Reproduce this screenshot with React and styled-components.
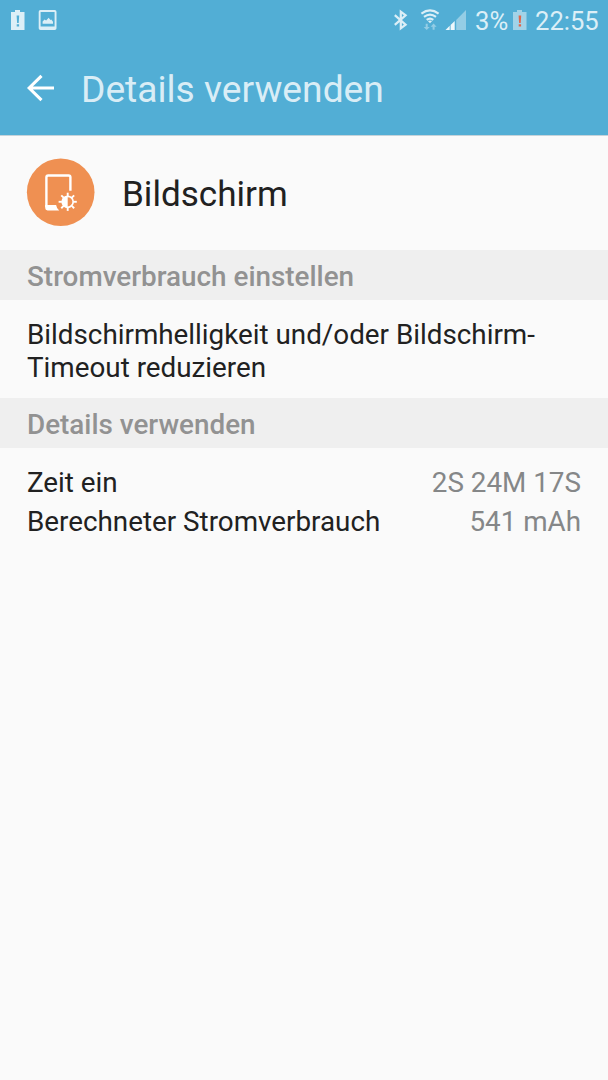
import React from 'react'
import styled, { createGlobalStyle } from 'styled-components'

const GlobalStyle = createGlobalStyle`
  body {
    margin:0;
    background:#fafafa;
    font-family:Roboto, "Liberation Sans", sans-serif;
  }
`

const Screen = styled.div`
  display:flex;
  flex-direction:column;
  min-height:1080px;
  background:#fafafa;
  overflow:hidden;
`

const Header = styled.header`
  box-sizing:border-box;
  height:136px;
  background:#52aed5;
  border-bottom:1px solid #c5d3da;
`

const StatusBar = styled.div`
  display:flex;
  justify-content:space-between;
  height:40px;
  padding:0 9px 0 10px;
  color:#dceff7;
`

const StatusGroup = styled.div`
  display:flex;
  align-items:center;
`

const StatusIcon = styled.svg`
  display:block;
  flex:none;
  margin-right:${props => props.$gap || 0}px;
`

const StatusText = styled.span`
  font-size:25.6px;
  line-height:40px;
  width:${props => props.$width}px;
  white-space:nowrap;
  padding-top:2px;
  margin-right:${props => props.$gap || 0}px;
`

const TitleBar = styled.div`
  display:flex;
  align-items:center;
  height:95px;
  padding-left:26px;
`

const BackButton = styled.button`
  display:block;
  width:30px;
  height:30px;
  margin:0 25px 0 0;
  padding:0;
  border:0;
  background:none;
`

const Title = styled.h1`
  margin:0;
  padding-top:3px;
  font-size:37.2px;
  font-weight:400;
  line-height:44px;
  white-space:nowrap;
  color:#d9edf6;
`

const AppRow = styled.div`
  display:flex;
  align-items:center;
  height:114px;
  padding-left:26px;
`

const AppName = styled.h2`
  margin:0 0 0 26px;
  padding-top:2px;
  font-size:35.1px;
  font-weight:400;
  color:#212121;
`

const SectionHeader = styled.h3`
  box-sizing:border-box;
  height:50px;
  margin:0;
  padding:2px 27px 0;
  background:#efefef;
  color:#929292;
  font-size:27.85px;
  font-weight:500;
  line-height:50px;
`

const Suggestion = styled.p`
  box-sizing:border-box;
  height:98px;
  margin:0;
  padding:19px 27px 0;
  font-size:27.8px;
  line-height:32.5px;
  color:#212121;
`

const DetailList = styled.div`
  padding:15px 27px 0;
`

const DetailRow = styled.div`
  display:flex;
  justify-content:space-between;
  height:39px;
  font-size:27.8px;
  line-height:39px;
`

const DetailLabel = styled.span`
  color:#212121;
`

const DetailValue = styled.span`
  color:#858788;
`

const BatteryIcon = ({fill, mark, gap}) => (
  <StatusIcon width="16" height="22" viewBox="0 0 16 22" $gap={gap}>
    <path fill={fill} d="M5 1h5v2h4.5v18H1V3h4z" />
    <path fill={mark} d="M6.6 6.5h2.6l-.5 7.5H7.1zM6.7 15.3h2.4v2.2H6.7z" />
  </StatusIcon>
)

const PictureIcon = () => (
  <StatusIcon width="20" height="22" viewBox="0 0 20 22">
    <path
      fill="#dceff7"
      fillRule="evenodd"
      d="M2.5 1h14.2a1.8 1.8 0 0 1 1.8 1.8v16.4a1.8 1.8 0 0 1-1.8 1.8H2.5A1.8 1.8 0 0 1 .7 19.2V2.8A1.8 1.8 0 0 1 2.5 1zM2.6 3v14.5h14V3z"
    />
    <path fill="#dceff7" d="M4.6 14.8v-2.4l2-2 1.5 1.2 2.6-2.9 1.7 2.4.9-.6 1.7 2.2v2.1z" />
  </StatusIcon>
)

const BluetoothIcon = () => (
  <StatusIcon width="16" height="22" viewBox="0 0 16 22" $gap="11">
    <path
      fill="none"
      stroke="#dceff7"
      strokeWidth="2.2"
      d="M1.8 6.2l10.8 9.5-4.8 3.6V2.7l4.8 3.6L1.8 15.8"
    />
  </StatusIcon>
)

const WifiIcon = () => (
  <StatusIcon width="20" height="22" viewBox="0 0 20 22" $gap="5">
    <g fill="none" stroke="#dceff7" strokeWidth="2.1">
      <path d="M1.4 4.6q8.6-6.4 17.2 0" />
      <path d="M4 7.9q6-4.6 12 0" />
      <path d="M6.7 10.9q3.3-2.6 6.6 0" />
    </g>
    <path fill="#dceff7" d="M7.9 12.1q2.1-1.3 4.2 0L10 14.2z" />
    <path fill="#94cde5" d="M5.7 14.8h2v3.1h2L6.7 21l-3-3.1h2zM12.6 20.8h2v-3.1h2l-3-3.2-3 3.2h2z" />
  </StatusIcon>
)

const SignalIcon = () => (
  <StatusIcon width="22" height="22" viewBox="0 0 22 22" $gap="8">
    <path fill="#94cde5" d="M11.2 10.9L21 1v20h-9.8z" />
    <path fill="#eef8fc" d="M.5 21L4.7 16.8v4.2zM5.6 15.9L9.7 12V21H5.6z" />
  </StatusIcon>
)

const BackIcon = () => (
  <svg width="30" height="30" viewBox="0 0 30 30">
    <path
      fill="none"
      stroke="#ffffff"
      strokeWidth="3.1"
      d="M15.5 2.8L3.2 15l12.3 12.2M3.2 15H28"
    />
  </svg>
)

const DisplayIcon = () => {
  const rays = [0, 45, 90, 135, 180, 225, 270, 315]

  return (
    <svg width="70" height="70" viewBox="0 0 70 70">
      <circle cx="34.7" cy="34.3" r="33.8" fill="#ef9052" />
      <path
        fill="none"
        stroke="#ffffff"
        strokeWidth="2.4"
        d="M44.4 32.7V19.3q0-1.8-1.8-1.8H22.2q-1.8 0-1.8 1.8V49"
      />
      <path fill="#ffffff" d="M19.2 47h10.9q.4 3.2 3.1 5.4H21.6q-2.4 0-2.4-2.4z" />
      <circle cx="41.7" cy="43.8" r="5.5" fill="none" stroke="#ffffff" strokeWidth="1.7" />
      <path fill="#ffffff" d="M41.7 38.2a5.6 5.6 0 0 0 0 11.2z" />
      {rays.map(angle => (
        <path
          key={angle}
          stroke="#ffffff"
          strokeWidth="1.9"
          d="M41.7 38v-3.3"
          transform={`rotate(${angle} 41.7 43.8)`}
        />
      ))}
    </svg>
  )
}

const details = [
  {label: 'Zeit ein', value: '2S 24M 17S'},
  {label: 'Berechneter Stromverbrauch', value: '541 mAh'},
]

const App = () => (
  <Screen>
    <GlobalStyle />
    <Header>
      <StatusBar>
        <StatusGroup>
          <BatteryIcon fill="#dceff7" mark="#52aed5" gap={12} />
          <PictureIcon />
        </StatusGroup>
        <StatusGroup>
          <BluetoothIcon />
          <WifiIcon />
          <SignalIcon />
          <StatusText $width={33} $gap={4}>3%</StatusText>
          <BatteryIcon fill="#a2d3e8" mark="#e0664a" gap={7} />
          <StatusText $width={64}>22:55</StatusText>
        </StatusGroup>
      </StatusBar>
      <TitleBar>
        <BackButton aria-label="Zurück">
          <BackIcon />
        </BackButton>
        <Title>Details verwenden</Title>
      </TitleBar>
    </Header>
    <AppRow>
      <DisplayIcon />
      <AppName>Bildschirm</AppName>
    </AppRow>
    <SectionHeader>Stromverbrauch einstellen</SectionHeader>
    <Suggestion>
      Bildschirmhelligkeit und/oder Bildschirm-Timeout reduzieren
    </Suggestion>
    <SectionHeader>Details verwenden</SectionHeader>
    <DetailList>
      {details.map(detail => (
        <DetailRow key={detail.label}>
          <DetailLabel>{detail.label}</DetailLabel>
          <DetailValue>{detail.value}</DetailValue>
        </DetailRow>
      ))}
    </DetailList>
  </Screen>
)

export default App
